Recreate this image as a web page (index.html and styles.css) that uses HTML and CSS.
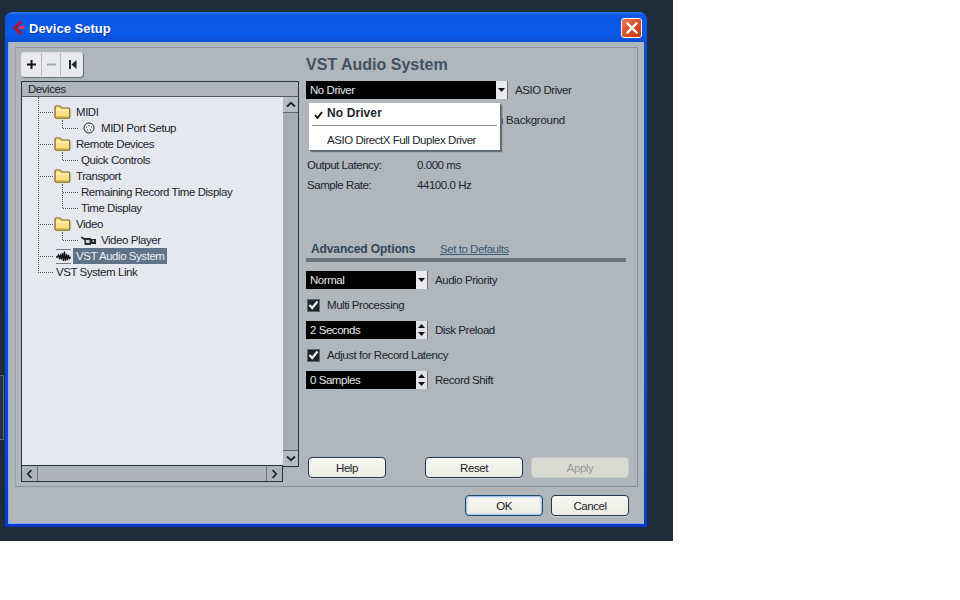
FILE: index.html
```html
<!DOCTYPE html>
<html lang="en">
<head>
<meta charset="utf-8">
<title>Device Setup</title>
<link rel="stylesheet" href="styles.css">
</head>
<body>
<div class="desktop">
  <div class="sliver"></div>
  <div class="window">
    <div class="titlebar">
      <svg class="logo" width="14" height="16" viewBox="0 0 14 16"><path d="M8 0.5 L1 7.5 L8 15.5 L10 12.5 L5 7.5 L10 3 Z" fill="#b01230"/><path d="M7 6 H13 L12 9 H7 Z" fill="#d83a48"/></svg>
      <span class="title-text">Device Setup</span>
      <button class="close" aria-label="Close"><svg width="14" height="14" viewBox="0 0 14 14"><path d="M2.5 2.5 L11.5 11.5 M11.5 2.5 L2.5 11.5" stroke="#fff" stroke-width="2.4" stroke-linecap="square"/></svg></button>
    </div>
    <div class="client">
      <div class="panel">
        <div class="left">
          <div class="toolbar">
            <span class="tool"><svg width="9" height="9" viewBox="0 0 9 9"><path d="M4.5 0 V9 M0 4.5 H9" stroke="#111" stroke-width="2"/></svg></span>
            <span class="tool"><svg width="9" height="9" viewBox="0 0 9 9"><path d="M0 4.5 H9" stroke="#a4a8ac" stroke-width="2"/></svg></span>
            <span class="tool"><svg width="8" height="9" viewBox="0 0 8 9"><path d="M0 0 H2 V9 H0 Z M7.5 0 V9 L2.5 4.5 Z" fill="#1a2630"/></svg></span>
          </div>
          <div class="treebox">
            <div class="tree-head">Devices</div>
            <div class="tree-main">
              <div class="tree-col">
                <div class="tree">
                  <div class="rows">
                    <div class="row"><i class="h"></i><svg class="folder" width="17" height="14" viewBox="0 0 17 14"><use href="#folder"/></svg><span class="lbl">MIDI</span></div>
                    <div class="row sub"><i class="h s"></i><svg class="midi" width="12" height="12" viewBox="0 0 12 12"><circle cx="6" cy="6" r="5" fill="#eceef2" stroke="#222" stroke-width="1"/><path d="M3 5h1M8 5h1M6 3v1M4 8h1M7 8h1" stroke="#222"/></svg><span class="lbl">MIDI Port Setup</span></div>
                    <div class="row"><i class="h"></i><svg class="folder" width="17" height="14" viewBox="0 0 17 14"><use href="#folder"/></svg><span class="lbl">Remote Devices</span></div>
                    <div class="row sub"><i class="h s"></i><span class="lbl plain">Quick Controls</span></div>
                    <div class="row"><i class="h"></i><svg class="folder" width="17" height="14" viewBox="0 0 17 14"><use href="#folder"/></svg><span class="lbl">Transport</span></div>
                    <div class="row sub"><i class="h s"></i><span class="lbl plain">Remaining Record Time Display</span></div>
                    <div class="row sub"><i class="h s tall"></i><span class="lbl plain">Time Display</span></div>
                    <div class="row"><i class="h"></i><svg class="folder" width="17" height="14" viewBox="0 0 17 14"><use href="#folder"/></svg><span class="lbl">Video</span></div>
                    <div class="row sub"><i class="h s"></i><svg class="cam" width="15" height="9" viewBox="0 0 15 9"><path d="M0 0.5 L4 2 H10 V9 H3.5 V4.5 L0 2 Z" fill="#2c3036"/><rect x="5" y="4" width="3.5" height="3" fill="#d0d3da"/><path d="M10 3 H15 V8 H10 Z" fill="#23272c"/><rect x="11.5" y="4.2" width="1.6" height="1.8" fill="#d0d3da"/></svg><span class="lbl">Video Player</span></div>
                    <div class="row"><i class="h"></i><svg class="wave" width="15" height="15" viewBox="0 0 15 15"><path d="M0 0.5 H15 M0 14.5 H15" stroke="#777a80"/><path d="M0 8 H1.5 L2.5 6 L3.5 10 L4.5 5.5 L5.5 10.5 L6.5 4 L7.5 12 L8.5 2.5 L9.5 12 L10.5 5 L11.5 11 L12.5 6 L13.5 9.5 L15 8" stroke="#14171a" stroke-width="1.3" fill="none"/></svg><span class="lbl selected">VST Audio System</span></div>
                    <div class="row"><i class="h"></i><span class="lbl link">VST System Link</span></div>
                  </div>
                </div>
                <div class="hscroll">
                  <span class="sbtn hl"><svg width="7" height="10" viewBox="0 0 7 10"><path d="M5.5 1 L1.8 5 L5.5 9" fill="none" stroke="#1a2630" stroke-width="1.8"/></svg></span>
                  <span class="sbtn hr"><svg width="7" height="10" viewBox="0 0 7 10"><path d="M1.5 1 L5.2 5 L1.5 9" fill="none" stroke="#1a2630" stroke-width="1.8"/></svg></span>
                </div>
              </div>
              <div class="vscroll">
                <span class="sbtn vt"><svg width="10" height="7" viewBox="0 0 10 7"><path d="M1 5.5 L5 1.8 L9 5.5" fill="none" stroke="#1a2630" stroke-width="1.8"/></svg></span>
                <span class="sbtn vb"><svg width="10" height="7" viewBox="0 0 10 7"><path d="M1 1.5 L5 5.2 L9 1.5" fill="none" stroke="#1a2630" stroke-width="1.8"/></svg></span>
              </div>
            </div>
          </div>
        </div>
        <div class="right">
          <h1 class="heading">VST Audio System</h1>
          <div class="line driver">
            <div class="field wide"><span>No Driver</span><span class="arrow"><svg width="7" height="4" viewBox="0 0 7 4"><path d="M0 0 H7 L3.5 4 Z" fill="#111"/></svg></span></div>
            <span class="cap">ASIO Driver</span>
            <div class="popup">
              <div class="pop-item strong"><svg class="tick" width="9" height="8" viewBox="0 0 9 8"><path d="M1 4 L3.5 7 L8 1" fill="none" stroke="#111" stroke-width="1.8"/></svg>No Driver</div>
              <div class="pop-sep"></div>
              <div class="pop-item">ASIO DirectX Full Duplex Driver</div>
            </div>
          </div>
          <div class="line background"><span>n Background</span></div>
          <div class="info first"><span class="k">Output Latency:</span><span>0.000 ms</span></div>
          <div class="info"><span class="k">Sample Rate:</span><span>44100.0 Hz</span></div>
          <div class="adv-head"><span class="adv-title">Advanced Options</span><span class="defaults">Set to Defaults</span></div>
          <div class="rule"></div>
          <div class="line"><div class="field short"><span>Normal</span><span class="arrow"><svg width="7" height="4" viewBox="0 0 7 4"><path d="M0 0 H7 L3.5 4 Z" fill="#111"/></svg></span></div><span class="cap">Audio Priority</span></div>
          <div class="check"><span class="box"><svg width="11" height="10" viewBox="0 0 11 10"><path d="M1.5 5 L4.2 8 L9.5 1.5" fill="none" stroke="#f2f2f2" stroke-width="2.2"/></svg></span><span>Multi Processing</span></div>
          <div class="line"><div class="field short"><span>2 Seconds</span><span class="spin"><svg width="7" height="4" viewBox="0 0 7 4"><path d="M0 4 H7 L3.5 0 Z" fill="#111"/></svg><svg width="7" height="4" viewBox="0 0 7 4"><path d="M0 0 H7 L3.5 4 Z" fill="#111"/></svg></span></div><span class="cap">Disk Preload</span></div>
          <div class="check"><span class="box"><svg width="11" height="10" viewBox="0 0 11 10"><path d="M1.5 5 L4.2 8 L9.5 1.5" fill="none" stroke="#f2f2f2" stroke-width="2.2"/></svg></span><span>Adjust for Record Latency</span></div>
          <div class="line"><div class="field short"><span>0 Samples</span><span class="spin"><svg width="7" height="4" viewBox="0 0 7 4"><path d="M0 4 H7 L3.5 0 Z" fill="#111"/></svg><svg width="7" height="4" viewBox="0 0 7 4"><path d="M0 0 H7 L3.5 4 Z" fill="#111"/></svg></span></div><span class="cap">Record Shift</span></div>
          <div class="actions">
            <button class="btn help">Help</button>
            <button class="btn big reset">Reset</button>
            <button class="btn big off">Apply</button>
          </div>
        </div>
      </div>
      <div class="footer">
        <button class="btn primary">OK</button>
        <button class="btn">Cancel</button>
      </div>
    </div>
  </div>
</div>
<svg class="defs" width="0" height="0"><defs><g id="folder"><path d="M1 3 Q1 1 2.5 1 H6 L7.5 3 H14.5 Q15.8 3 15.8 4.5 V12 Q15.8 13.2 14.5 13.2 H2.5 Q1 13.2 1 12 Z" fill="#f8e083" stroke="#7d6118" stroke-width="1.2"/><path d="M2 5 H15" stroke="#fff6c4" stroke-width="1.2"/><path d="M2 12 H15" stroke="#c7a032"/></g></defs></svg>
</body>
</html>
```
FILE: styles.css
```css
* { box-sizing: border-box; }
html, body { margin: 0; height: 100%; background: #fff; }
body { font-family: "Liberation Sans", Arial, sans-serif; font-size: 11.5px; letter-spacing: -0.45px; color: #1c242c; }
.defs { position: absolute; }
.desktop { position: relative; width: 673px; height: 541px; background: #1f2c3a; padding: 12px 0 0 5px; }
.sliver { position: absolute; left: 0; top: 375px; width: 4px; height: 65px; border: 1px solid #5c6772; border-left: 0; background: #25323f; }
.window { width: 642px; height: 515px; padding: 0 3px 3px; border-radius: 8px 8px 0 0; background: linear-gradient(#0a50dc, #0a4ce0 60%, #0838c8); display: flex; flex-direction: column; }
.titlebar { height: 30px; flex: none; display: flex; align-items: center; margin: 0 -3px; padding: 0 5px 0 7px; border-radius: 8px 8px 0 0; background: linear-gradient(#2f80f0 0, #0a58e4 3px, #0a5ae8 22px, #0a4ed0 30px); }
.logo { flex: none; margin-right: 3px; margin-top: 1px; }
.title-text { color: #fff; font-weight: 700; font-size: 13px; letter-spacing: 0; text-shadow: 1px 1px 0 #0a3a9a; flex: 1; margin-top: 3px; }
.close { width: 21px; height: 20px; padding: 0; margin-top: 2px; border: 1px solid #f2f4fa; border-radius: 3px; background: linear-gradient(135deg, #ee7a58, #d8481c 60%, #c23a14); display: flex; align-items: center; justify-content: center; }
.client { flex: 1; background: #afb6bc; padding: 5px 15px 0 7px; display: flex; flex-direction: column; border-bottom: 1px solid #7fb0f0; border-left: 1px solid #7fb0f0; }
.panel { height: 440px; margin-left: -1px; margin-right: -9px; border: 1px solid #8b9298; border-left-color: #9aa1a7; padding: 0 7px 0 5px; display: flex; gap: 7px; flex: none; }
.left { width: 278px; flex: none; display: flex; flex-direction: column; padding: 4px 0; }
.toolbar { width: 62px; height: 25px; display: flex; background: #e8eaee; border-radius: 3px; border: 1px solid #e0e2e6; box-shadow: 1px 1px 1px #6b7278; }
.tool { flex: 1; display: flex; align-items: center; justify-content: center; border-right: 1px solid #b8bcc2; }
.tool:last-child { border-right: 0; padding-left: 2px; }
.treebox { margin-top: 4px; flex: 1; display: flex; flex-direction: column; }
.tree-head { height: 16px; line-height: 15px; padding-left: 6px; background: #afb5bb; border-top: 1px solid #27323c; border-left: 1px solid #27323c; border-right: 1px solid #27323c; border-bottom: 1px solid #4e5a64; }
.tree-main { flex: 1; display: flex; }
.tree-col { width: 262px; flex: none; display: flex; flex-direction: column; border-left: 1px solid #27323c; }
.tree { flex: 1; background: #e6e8f0; padding: 7px 0 0 16px; }
.rows { position: relative; margin-top: -7px; padding-top: 7px; }
.rows::before { content: ""; position: absolute; left: 0; top: 0; bottom: 7px; border-left: 1px dotted #4e5660; }
.row { height: 16px; display: flex; align-items: center; position: relative; }
.row.sub { padding-left: 25px; }
.h { display: block; flex: none; width: 15px; height: 0; border-top: 1px dotted #4e5660; position: relative; }
.h.s::before { content: ""; position: absolute; left: -1px; top: -9px; height: 8px; border-left: 1px dotted #4e5660; }
.h.tall::before { top: -25px; height: 24px; }
.folder { flex: none; margin-left: 1px; }
.lbl { margin-left: 5px; white-space: nowrap; padding: 0 0 1px; }
.lbl.plain { margin-left: 3px; }
.lbl.link { margin-left: 3px; }
.midi { flex: none; margin-left: 5px; }
.midi + .lbl { margin-left: 6px; }
.cam { flex: none; margin-left: 3px; }
.cam + .lbl { margin-left: 5px; }
.wave { flex: none; margin-left: 3px; }
.lbl.selected { margin-left: 2px; height: 16px; line-height: 16px; padding: 0 3px; background: #5f7389; color: #eef0f4; }
.hscroll { height: 17px; flex: none; margin-top: -1px; display: flex; justify-content: space-between; background: #adb3b9; border-top: 1px solid #27323c; border-bottom: 1px solid #27323c; border-right: 1px solid #27323c; }
.sbtn { display: flex; align-items: center; justify-content: center; flex: none; background: #adb3b9; }
.hl { width: 16px; border-right: 1px solid #6c757d; }
.hr { width: 16px; border-left: 1px solid #6c757d; }
.vscroll { width: 16px; height: 370px; flex: none; display: flex; flex-direction: column; justify-content: space-between; background: #a5acb2; border-right: 1px solid #27323c; border-bottom: 1px solid #27323c; }
.vt { height: 16px; border-bottom: 1px solid #5e6870; background: #b6bcc1; }
.vb { height: 16px; border-top: 1px solid #5e6870; background: #b6bcc1; }
.right { flex: 1; display: flex; flex-direction: column; padding: 7px 0 8px; min-width: 0; }
.heading { margin: 0 0 6px; height: 20px; line-height: 20px; font-size: 16px; font-weight: 700; letter-spacing: 0; color: #3f5263; }
.line { display: flex; align-items: center; height: 18px; flex: none; }
.driver { position: relative; }
.field { height: 18px; background: #000; color: #e8e8e8; display: flex; justify-content: space-between; padding-left: 4px; line-height: 18px; border-right: 1px solid #6c7379; }
.field.wide { width: 202px; }
.field.short { width: 122px; }
.arrow { width: 11px; background: #e8eaee; display: flex; align-items: center; justify-content: center; }
.spin { width: 11px; background: #e0e2e6; display: flex; flex-direction: column; align-items: center; justify-content: space-around; padding: 1px 0; }
.cap { margin-left: 7px; }
.popup { position: absolute; left: 3px; top: 22px; width: 191px; height: 47px; background: #fff; box-shadow: 1px 1px 0 #5c6670, 2px 2px 1px #69727a; padding-top: 1px; z-index: 2; }
.pop-item { height: 20px; line-height: 19px; padding-left: 18px; position: relative; white-space: nowrap; }
.pop-item:last-child { margin-top: 3px; height: 22px; line-height: 22px; }
.pop-item.strong { font-size: 12px; font-weight: 700; letter-spacing: 0.1px; }
.tick { position: absolute; left: 5px; top: 7px; }
.pop-sep { height: 1px; margin: 1px 3px 0; background: #8c9298; }
.background { margin: 13px 0 0 191px; height: 16px; white-space: nowrap; letter-spacing: -0.25px; }
.info { display: flex; height: 20px; line-height: 20px; flex: none; padding-left: 1px; }
.info.first { margin-top: 27px; }
.k { width: 110px; flex: none; }
.adv-head { margin-top: 46px; height: 17px; line-height: 16px; display: flex; flex: none; padding-left: 5px; }
.adv-title { width: 129px; font-size: 12px; font-weight: 700; color: #2f465a; letter-spacing: -0.1px; }
.defaults { color: #3a5a74; text-decoration: underline; }
.rule { height: 4px; width: 320px; background: #6e7377; flex: none; margin-bottom: 9px; }
.check { height: 16px; margin: 8px 0; display: flex; align-items: center; flex: none; }
.box { width: 13px; height: 13px; margin: 0 7px 0 1px; background: #1c232a; border: 1px solid #5a646c; display: flex; align-items: center; justify-content: center; flex: none; }
.actions { margin-top: auto; display: flex; padding-left: 2px; flex: none; }
.btn { width: 78px; height: 21px; padding: 0; background: linear-gradient(#f8f7f2, #ecebe3); border: 1px solid #22374b; border-radius: 4px; font: inherit; letter-spacing: inherit; color: #1c242c; box-shadow: 0 1px 0 #ccd0d2; }
.big { width: 98px; }
.reset { margin-left: 39px; }
.off { margin-left: 8px; background: #d9dad2; border-color: #c8cbc6; color: #9a9b98; box-shadow: none; }
.footer { margin: 8px 0 0; display: flex; justify-content: flex-end; gap: 8px; }
.primary { border-color: #1c4a78; box-shadow: inset 0 0 0 1px #a8c8e8, inset 0 0 0 2px #d8e6f2; }
```
